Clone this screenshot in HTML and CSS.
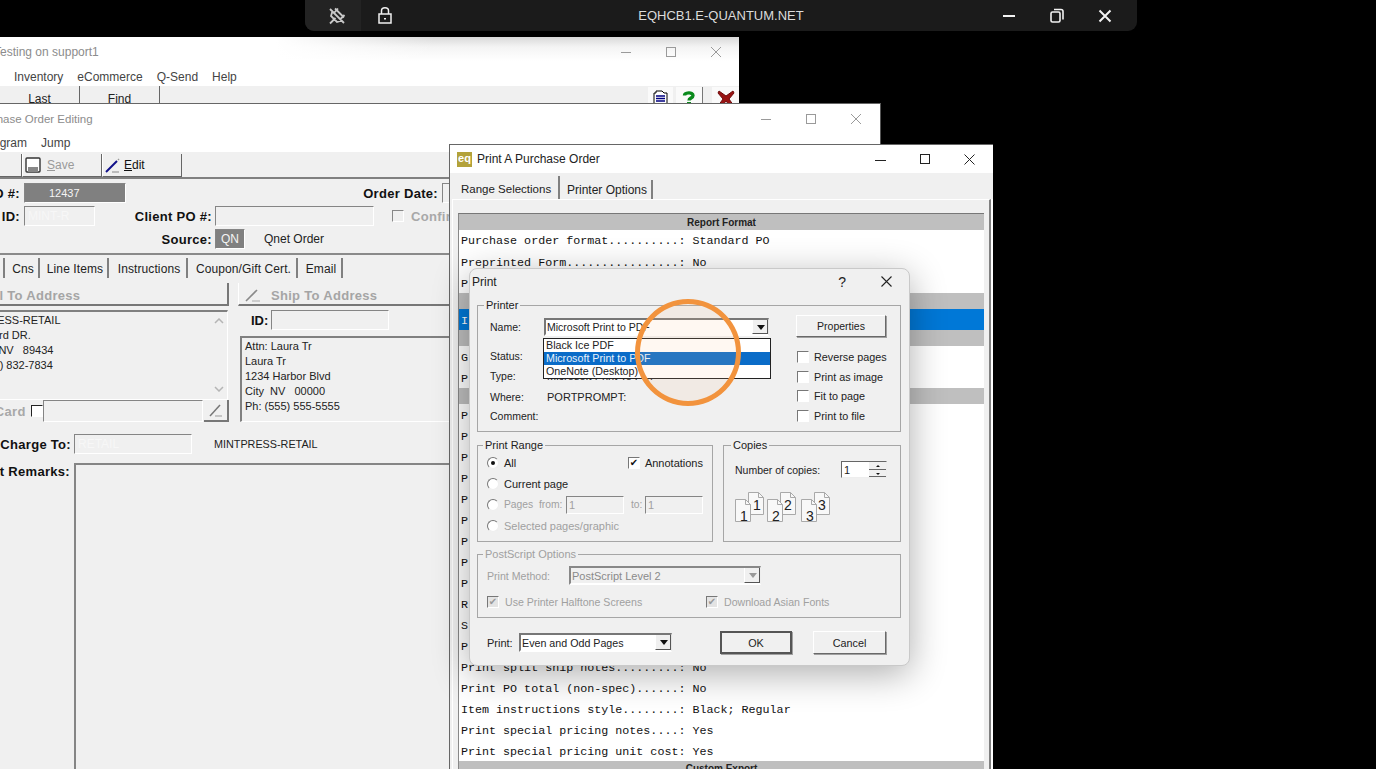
FILE: index.html
```html
<!DOCTYPE html>
<html lang="en">
<head>
<meta charset="utf-8">
<title>EQHCB1.E-QUANTUM.NET</title>
<link rel="stylesheet" href="styles.css">
</head>
<body>
<header class="rdp-bar">
  <div class="rdp-left">
    <div class="rdp-pin">
      <svg width="18" height="18" viewBox="0 0 18 18" fill="none" stroke="#c8c8c8" stroke-width="1.800"><path d="M2 2l14 14M7 1.500l9 9M4.500 4L3 9l6 6 5-1.500M10 1.500L6 6M16.500 8l-4 4M7.500 11L2 16.500"/></svg>
    </div>
    <svg class="rdp-lock" width="14" height="17" viewBox="0 0 14 17" fill="none" stroke="#f0f0f0" stroke-width="1.500"><rect x="1" y="7" width="12" height="9"/><path d="M3.500 7V3.800a3.500 3 0 0 1 7 0V7"/><rect x="6" y="11" width="2" height="1.500" fill="#f0f0f0" stroke="none"/></svg>
  </div>
  <div class="rdp-title">EQHCB1.E-QUANTUM.NET</div>
  <div class="rdp-controls">
    <svg width="13" height="13" viewBox="0 0 13 13"><path d="M0 7h12" stroke="#f2f2f2" stroke-width="2"/></svg>
    <svg width="14" height="15" viewBox="0 0 14 15" fill="none" stroke="#f2f2f2" stroke-width="1.600"><rect x="1" y="4" width="9" height="10" rx="1.500"/><path d="M4 1.500h7a2 2 0 0 1 2 2v8"/></svg>
    <svg width="14" height="14" viewBox="0 0 14 14"><path d="M1.500 1.500l11 11M12.500 1.500l-11 11" stroke="#f2f2f2" stroke-width="2"/></svg>
  </div>
</header>

<section class="window win-back">
  <div class="win-title">
    <span class="title-text">Testing on support1</span>
    <div class="caption-btns dim">
      <svg width="10" height="10" viewBox="0 0 10 10"><path d="M0 5.500h10" stroke="currentColor"/></svg>
      <svg width="10" height="10" viewBox="0 0 10 10"><rect x=".5" y=".5" width="9" height="9" fill="none" stroke="currentColor"/></svg>
      <svg width="10" height="10" viewBox="0 0 10 10"><path d="M0 0l10 10M10 0L0 10" stroke="currentColor"/></svg>
    </div>
  </div>
  <nav class="menu menu-back"><span>Inventory</span><span>eCommerce</span><span>Q-Send</span><span>Help</span></nav>
  <div class="toolbar-back">
    <div class="tb-back-btn">Last</div>
    <div class="tb-back-btn">Find</div>
    <div class="tb-back-icons">
      <div class="tb-icon">
        <svg width="15" height="15" viewBox="0 0 15 15"><path d="M3 1h6l2 2h3v12H1V3h2z" fill="#fff" stroke="#000"/><path d="M3 6h9M3 8.500h9M3 11h9" stroke="#000080" stroke-width="1.500"/></svg>
      </div>
      <div class="tb-icon tb-icon-q"><svg width="14" height="16" viewBox="0 0 14 16"><path d="M2.500 5.500C2.500 2.500 11 1.500 11 5.500c0 2.500-4 2.500-4 5" fill="none" stroke="#0a8a1c" stroke-width="3.400"/><rect x="5" y="12" width="4" height="4" fill="#0a8a1c"/></svg></div>
      <div class="tb-icon tb-icon-x"><svg width="18" height="16" viewBox="0 0 18 16"><path d="M2 1l7 5 7-5 1 2-5 6 5 7h-4l-4-5-4 5H1l5-7-5-6z" fill="#9a1414" stroke="#6e0c0c"/></svg></div>
    </div>
  </div>
</section>

<section class="window win-edit">
  <div class="win-title win-title-edit">
    <span class="title-text">Purchase Order Editing</span>
    <div class="caption-btns dim caption-edit">
      <svg width="10" height="10" viewBox="0 0 10 10"><path d="M0 5.500h10" stroke="currentColor"/></svg>
      <svg width="10" height="10" viewBox="0 0 10 10"><rect x=".5" y=".5" width="9" height="9" fill="none" stroke="currentColor"/></svg>
      <svg width="10" height="10" viewBox="0 0 10 10"><path d="M0 0l10 10M10 0L0 10" stroke="currentColor"/></svg>
    </div>
  </div>
  <nav class="menu menu-edit"><span>Program</span><span>Jump</span></nav>
  <div class="toolbar-edit">
    <div class="tool-btn tool-first"></div>
    <div class="tool-btn tool-off">
      <svg width="16" height="16" viewBox="0 0 16 16"><rect x="1" y="1" width="14" height="14" rx="1" fill="#fff" stroke="#333" stroke-width="1.400"/><rect x="3" y="10" width="10" height="5" fill="#888"/></svg>
      <span><u>S</u>ave</span>
    </div>
    <div class="tool-btn tool-edit">
      <svg width="16" height="16" viewBox="0 0 16 16"><path d="M1 15L12 4" stroke="#10108a" stroke-width="2"/><path d="M13 3l1-1" stroke="#999" stroke-width="1.500"/><path d="M7 15h7" stroke="#888"/></svg>
      <span><u>E</u>dit</span>
    </div>
  </div>

  <div class="po-grid">
    <label class="b lab r1">PO #:</label>
    <div class="field dark po-num">12437</div>
    <label class="b lab po-date-l">Order Date:</label>
    <div class="field po-date"></div>
    <label class="b lab r2">ID:</label>
    <div class="field po-id faint">MINT-R</div>
    <label class="b lab po-client-l">Client PO #:</label>
    <div class="field po-client"></div>
    <div class="po-conf"><i class="box off"></i><span class="b">Confirmed</span></div>
    <label class="b lab po-src-l">Source:</label>
    <div class="field dark po-src">QN</div>
    <div class="po-src-t">Qnet Order</div>
  </div>

  <div class="edit-tabs">
    <span></span><span>Cns</span><span>Line Items</span><span>Instructions</span><span>Coupon/Gift Cert.</span><span>Email</span>
  </div>

  <div class="addr-grid">
    <div class="addr-col">
      <div class="addr-btn"><span>Bill To Address</span></div>
      <div class="addr-box bill">
        <div class="addr-lines">
          <div>MINTPRESS-RETAIL</div>
          <div>100 Millard DR.</div>
          <div>Sparks&nbsp; &nbsp;NV &nbsp; 89434</div>
          <div>Ph:&nbsp; (775) 832-7834</div>
        </div>
        <div class="scroll">
          <svg width="10" height="6" viewBox="0 0 10 6"><path d="M1 5l4-4 4 4" fill="none" stroke="#b5b5b5" stroke-width="1.500"/></svg>
          <svg width="10" height="6" viewBox="0 0 10 6"><path d="M1 1l4 4 4-4" fill="none" stroke="#b5b5b5" stroke-width="1.500"/></svg>
        </div>
      </div>
      <div class="card-row">
        <span class="b gray">Credit Card</span><i class="box"></i>
        <div class="field card-field"></div>
        <div class="pencil-btn"><svg width="14" height="14" viewBox="0 0 14 14"><path d="M1 13L11 2" stroke="#777" stroke-width="1.500"/><path d="M6 13h7" stroke="#999"/></svg></div>
      </div>
    </div>
    <div class="addr-col">
      <div class="addr-btn addr-ship">
        <svg width="16" height="14" viewBox="0 0 16 14"><path d="M1 13L12 2" stroke="#8a8a8a" stroke-width="1.600"/><path d="M7 13h8" stroke="#aaa"/></svg>
        <span>Ship To Address</span>
      </div>
      <div class="ship-id"><label class="b ship-lab">ID:</label><div class="field ship-field"></div></div>
      <div class="addr-box ship">
        <div class="addr-lines ship-lines">
          <div>Attn: Laura Tr</div>
          <div>Laura Tr</div>
          <div>1234 Harbor Blvd</div>
          <div>City&nbsp; NV &nbsp; 00000</div>
          <div>Ph: (555) 555-5555</div>
        </div>
      </div>
    </div>
  </div>

  <div class="charge-row">
    <label class="b lab">Charge To:</label>
    <div class="field charge-field faint">RETAIL</div>
    <span class="charge-name">MINTPRESS-RETAIL</span>
  </div>
  <div class="remarks-row">
    <label class="b lab">Client Remarks:</label>
    <div class="field remarks"></div>
  </div>
</section>

<section class="window win-print">
  <div class="pw-title">
    <span class="eq-logo">eq</span>
    <span>Print A Purchase Order</span>
    <div class="caption-btns pw-caps">
      <svg width="11" height="11" viewBox="0 0 11 11"><path d="M0 6.500h11" stroke="currentColor"/></svg>
      <svg width="10" height="10" viewBox="0 0 10 10"><rect x=".5" y=".5" width="9" height="9" fill="none" stroke="currentColor"/></svg>
      <svg width="11" height="11" viewBox="0 0 11 11"><path d="M.5.500l10 10M10.500.500l-10 10" stroke="currentColor"/></svg>
    </div>
  </div>
  <div class="pw-tabs"><span class="on">Range Selections</span><span>Printer Options</span></div>
  <div class="pw-panel">
    <div class="report">
      <div class="rh rh-first">Report Format</div>
      <div class="rr rr-first">Purchase order format..........: Standard PO</div>
      <div class="rr">Preprinted Form................: No</div>
      <div class="rr">P</div>
      <div class="rh"></div>
      <div class="rr sel">I</div>
      <div class="rh"></div>
      <div class="rr">G</div>
      <div class="rr">P</div>
      <div class="rh"></div>
      <div class="rr">P</div>
      <div class="rr">P</div>
      <div class="rr">P</div>
      <div class="rr">P</div>
      <div class="rr">P</div>
      <div class="rr">P</div>
      <div class="rr">P</div>
      <div class="rr">P</div>
      <div class="rr">P</div>
      <div class="rr">R</div>
      <div class="rr">S</div>
      <div class="rr">P</div>
      <div class="rr">Print split ship notes.........: No</div>
      <div class="rr">Print PO total (non-spec)......: No</div>
      <div class="rr">Item instructions style........: Black; Regular</div>
      <div class="rr">Print special pricing notes....: Yes</div>
      <div class="rr">Print special pricing unit cost: Yes</div>
      <div class="rh">Custom Export</div>
    </div>
  </div>
</section>

<section class="dialog">
  <div class="dlg-title">
    <span>Print</span>
    <div class="dlg-caps">
      <span class="q">?</span>
      <svg width="11" height="11" viewBox="0 0 11 11"><path d="M.5.500l10 10M10.500.500l-10 10" stroke="#222" stroke-width="1.100"/></svg>
    </div>
  </div>
  <div class="group g-printer">
    <span class="legend">Printer</span>
    <div class="printer-main">
      <div class="p-left">
        <div class="name-row">
          <span class="p-lab">Name:</span>
          <div class="combo name-combo"><span>Microsoft Print to PDF</span><b class="arrow"></b></div>
        </div>
        <div class="p-row"><span class="p-lab">Status:</span></div>
        <div class="p-row"><span class="p-lab">Type:</span><span>Microsoft Print To PDF</span></div>
        <div class="p-row p-where"><span class="p-lab">Where:</span><span>PORTPROMPT:</span></div>
        <div class="p-row p-comment"><span class="p-lab">Comment:</span></div>
      </div>
      <div class="p-right">
        <div class="btn prop-btn">Properties</div>
        <div class="chk-row"><i class="box light"></i>Reverse pages</div>
        <div class="chk-row"><i class="box light"></i>Print as image</div>
        <div class="chk-row chk-fit"><i class="box light"></i>Fit to page</div>
        <div class="chk-row"><i class="box light"></i>Print to file</div>
      </div>
    </div>
    <div class="dropdown">
      <div>Black Ice PDF</div>
      <div class="dd-sel">Microsoft Print to PDF</div>
      <div>OneNote (Desktop)</div>
    </div>
  </div>
  <div class="group-pair">
    <div class="group g-range">
      <span class="legend">Print Range</span>
      <div class="rg-row"><i class="radio on"></i><span>All</span>
        <div class="annot"><i class="box light tick">&#10004;</i>Annotations</div></div>
      <div class="rg-row"><i class="radio"></i><span>Current page</span></div>
      <div class="rg-row muted"><i class="radio"></i><span class="pg-lab">Pages&nbsp; from:</span><div class="field pg-field">1</div><span class="to-lab">to:</span><div class="field pg-field">1</div></div>
      <div class="rg-row muted"><i class="radio"></i><span>Selected pages/graphic</span></div>
    </div>
    <div class="group g-copies">
      <span class="legend">Copies</span>
      <div class="cp-row"><span class="cp-lab">Number of copies:</span>
        <div class="spin"><span>1</span><div class="spin-btns"><b></b><b class="dn"></b></div></div>
      </div>
      <svg class="collate" width="100" height="32" viewBox="0 0 100 32">
        <defs>
          <g id="sheet"><path d="M.5.500h10l5 5v17H.500z" fill="#f8f8f8" stroke="#a9a9a9"/><path d="M10.500.500v5h5" fill="none" stroke="#a9a9a9"/></g>
        </defs>
        <g font-family="Liberation Sans, sans-serif" font-size="14" fill="#222">
          <use href="#sheet" x="14"/><use href="#sheet" x="1" y="7"/><text x="19" y="18">1</text><text x="6" y="29">1</text>
          <use href="#sheet" x="46"/><use href="#sheet" x="33" y="7"/><text x="50" y="18">2</text><text x="38" y="29">2</text>
          <use href="#sheet" x="80"/><use href="#sheet" x="67" y="7"/><text x="84" y="18">3</text><text x="72" y="29">3</text>
        </g>
      </svg>
    </div>
  </div>
  <div class="group g-ps muted">
    <span class="legend">PostScript Options</span>
    <div class="ps-row"><span class="ps-lab">Print Method:</span>
      <div class="combo ps-combo"><span>PostScript Level 2</span><b class="arrow off"></b></div>
    </div>
    <div class="ps-checks">
      <div class="ps-c1"><i class="box light tick off">&#10004;</i>Use Printer Halftone Screens</div>
      <div class="ps-c2"><i class="box light tick off">&#10004;</i>Download Asian Fonts</div>
    </div>
  </div>
  <div class="dlg-foot">
    <span class="foot-lab">Print:</span>
    <div class="combo foot-combo"><span>Even and Odd Pages</span><b class="arrow"></b></div>
    <div class="btn ok-btn">OK</div>
    <div class="btn cancel-btn">Cancel</div>
  </div>
</section>

<div class="marker"></div>
</body>
</html>
```
FILE: styles.css
```css
* { box-sizing: border-box; }
html, body { margin: 0; height: 100%; }
body {
  position: relative;
  width: 1376px;
  height: 769px;
  overflow: hidden;
  background: #000;
  font-family: "Liberation Sans", Arial, sans-serif;
  font-size: 12px;
  color: #222;
}
i { display: block; font-style: normal; flex: none; }

/* remote desktop bar */
.rdp-bar {
  position: absolute; left: 305px; top: 0; width: 832px; height: 31px;
  display: grid; grid-template-columns: 1fr auto 1fr; align-items: center;
  background: #1b1b1b; border-radius: 0 0 9px 9px; color: #ddd;
}
.rdp-left { display: flex; align-items: center; height: 100%; }
.rdp-pin { width: 56px; height: 100%; display: flex; align-items: center; justify-content: center; background: #232323; border-radius: 0 0 0 9px; padding-left: 8px; }
.rdp-lock { margin-left: 17px; }
.rdp-title { font-size: 13px; color: #dcdcdc; }
.rdp-controls { display: flex; justify-content: flex-end; align-items: center; gap: 34px; padding-right: 25px; }

.window { position: absolute; overflow: hidden; }
.caption-btns { display: flex; align-items: center; gap: 35px; margin-left: auto; color: #222; }
.caption-btns.dim { color: #9a9a9a; }
.title-text { color: #8c8c8c; }

/* back window */
.win-back { left: -60px; top: 37px; width: 799px; height: 67px; background: #fff; }
.win-back .win-title {
  height: 28px; display: flex; align-items: center; padding: 2px 18px 0 54px;
  background: linear-gradient(90deg, #fff 42%, rgba(255,255,255,0) 62%), linear-gradient(180deg, #d9d9d9 0, #f4f4f4 10px, #fff 24px);
}
.menu { display: flex; color: #444; }
.menu-back { height: 21px; align-items: center; gap: 14px; padding: 2px 0 0 74px; }
.toolbar-back { height: 18px; background: #f0f0f0; display: flex; }
.tb-back-btn { width: 80px; height: 30px; border-right: 1px solid #666; text-align: center; padding-top: 6px; color: #222; }
.tb-back-btn:first-child { width: 140px; padding-left: 60px; }
.tb-back-icons { margin-left: auto; display: flex; padding-right: 0; padding-top: 1px; }
.tb-icon { width: 25px; height: 20px; background: #fafafa; display: flex; justify-content: center; padding-top: 3px; margin-left: 3px; }
.tb-icon-q { width: 27px; border-right: 1px solid #777; }
.tb-icon-x { margin-left: 9px; width: 27px; }

/* edit window */
.win-edit { left: -60px; top: 103px; width: 941px; height: 666px; background: #f0f0f0; border-top: 1px solid #666; border-right: 1px solid #555; }
.win-title-edit { height: 29px; background: #fff; display: flex; align-items: center; padding: 0 19px 0 60px; }
.win-title-edit .title-text { font-size: 11.500px; margin-left: -27px; }
.menu-edit { height: 19px; background: #fff; align-items: center; gap: 14px; padding-left: 41px; }
.toolbar-edit { height: 27px; display: flex; padding: 2px 0 0 2px; border-bottom: 2px solid #808080; }
.tool-btn {
  width: 80px; height: 23px; display: flex; align-items: center; gap: 6px; padding-left: 2px;
  border-right: 1px solid #666; border-bottom: 1px solid #666; border-left: 1px solid #fff;
  color: #111; font-size: 12px;
}
.tool-off { color: #9a9a9a; }
.tool-edit { gap: 3px; }
.tool-first { width: 80px; }

.po-grid {
  display: grid;
  grid-template-columns: 80px 4px 71px 31px 86px 3px 30px 129px 64px 4px 78px;
  grid-auto-rows: 20px; row-gap: 3px; padding-top: 4px; align-items: center;
}
.b { font-weight: 700; font-size: 13px; color: #111; letter-spacing: .3px; }
.lab { text-align: right; white-space: nowrap; }
.field {
  height: 100%; background: #f0f0f0; border: 1px solid; border-color: #858585 #fff #fff #858585;
  display: flex; align-items: center; padding-left: 3px; overflow: hidden; white-space: nowrap;
}
.field.dark { background: #808080; color: #f4f4f4; }
.field.faint { color: #f7f7f7; }
.r1, .r2 { grid-column: 1; }
.po-num { grid-column: 3 / 5; padding-left: 24px; font-size: 11px; }
.po-date-l { grid-column: 5 / 10; }
.po-date { grid-column: 11; }
.po-id { grid-column: 3 / 4; }
.po-client-l { grid-column: 5 / 6; }
.po-client { grid-column: 7 / 9; }
.po-conf { grid-column: 9 / 12; display: flex; align-items: center; gap: 7px; padding-left: 18px; white-space: nowrap; }
.po-conf .b { color: #a8a8a8; }
.po-src-l { grid-column: 5 / 6; }
.po-src { grid-column: 7 / 8; padding-left: 5px; }
.po-src-t { grid-column: 8 / 11; padding-left: 19px; white-space: nowrap; }

.box { width: 12px; height: 12px; background: #fff; border: 1px solid; border-color: #222 #fff #fff #222; }
.box.off { background: #f0f0f0; border-color: #888 #fff #fff #888; }
.box.light { border-color: #777 #fff #fff #777; }

.edit-tabs {
  margin-top: 4px; border-top: 2px solid #8a8a8a; padding-top: 3px; height: 28px;
  display: grid; grid-template-columns: 65px 35px 69px 79px 110px 45px; justify-content: start;
}
.edit-tabs span { height: 20px; border-right: 2px solid #808080; padding-left: 3px; text-align: center; line-height: 22px; white-space: nowrap; letter-spacing: .1px; }

.addr-grid { display: grid; grid-template-columns: 289px 340px; column-gap: 9px; padding-top: 2px; }
.addr-col { display: flex; flex-direction: column; }
.addr-btn {
  height: 23px; display: flex; align-items: center; padding: 3px 0 0 41px; font-weight: 700; font-size: 13px; color: #a5a5a5;
  border-right: 2px solid #777; border-bottom: 2px solid #777; border-left: 1px solid #fff; letter-spacing: .3px;
}
.addr-ship { padding-left: 6px; gap: 10px; }
.addr-box { border: 1px solid; border-color: #808080 #fff #fff #808080; display: flex; border-top-width: 2px; border-left-width: 2px; }
.bill { height: 90px; margin: 4px 1px 0 0; }
.addr-lines { flex: 1; padding: 1px 0 0 13px; line-height: 15px; white-space: nowrap; color: #222; font-size: 11px; }
.scroll { width: 16px; display: flex; flex-direction: column; justify-content: space-between; align-items: center; padding: 6px 0 7px; }
.card-row { display: flex; align-items: center; height: 22px; }
.card-row .gray { color: #a8a8a8; white-space: nowrap; width: 86px; text-align: right; }
.card-row .box { margin-left: 5px; }
.card-field { width: 161px; }
.pencil-btn { width: 25px; height: 22px; display: flex; align-items: center; justify-content: center; border-right: 2px solid #777; border-bottom: 2px solid #777; margin-left: 1px; }
.ship-id { display: flex; height: 20px; margin-top: 4px; align-items: center; padding-left: 13px; gap: 3px; }
.ship-lab { width: 17px; letter-spacing: 0; white-space: nowrap; }
.ship-field { width: 118px; }
.ship { height: 86px; margin: 6px 0 0 2px; }
.ship-lines { padding-left: 3px; padding-top: 1px; }
.charge-row { display: grid; grid-template-columns: 131px 118px auto; height: 20px; margin-top: 12px; align-items: center; column-gap: 3px; }
.charge-row .lab { grid-column: 1; }
.charge-name { padding-left: 19px; font-size: 10.800px; }
.remarks-row { display: grid; grid-template-columns: 130px 700px; column-gap: 4px; margin-top: 9px; height: 320px; }
.remarks-row .lab { padding-top: 1px; }
.remarks { align-items: flex-start; border-top-width: 2px; border-left-width: 2px; }

/* print window */
.win-print { left: 449px; top: 144px; width: 544px; height: 625px; background: #f0f0f0; border: 1px solid #666; border-bottom: 0; border-right: 0; }
.pw-title { height: 28px; background: #fff; display: flex; align-items: center; padding: 0 18px 0 7px; gap: 5px; color: #222; }
.eq-logo { width: 15px; height: 15px; background: #b3a23a; color: #fff; font-size: 11px; font-weight: 700; line-height: 13px; text-align: center; }
.pw-caps { gap: 34px; color: #222; }
.pw-tabs { display: flex; height: 26px; padding: 3px 0 0 2px; white-space: nowrap; }
.pw-tabs span { height: 23px; padding: 0 0 0 7px; border-right: 2px solid #808080; }
.pw-tabs .on { width: 108px; padding-left: 9px; font-size: 11.500px; line-height: 26px; }
.pw-tabs span:not(.on) { margin-top: 4px; height: 19px; line-height: 20px; width: 93px; }
.pw-panel { height: 570px; margin: 0 2px 0 2px; padding: 13px 5px 0 5px; border-top: 1px solid #fff; border-left: 1px solid #fff; border-right: 2px solid #808080; box-shadow: 2px 0 0 #fff; }
.report { background: #fff; border-top: 1px solid #777; border-left: 1px solid #888; width: 526px; height: 560px; font-family: "Liberation Mono", "Courier New", monospace; font-size: 11.700px; color: #111; overflow: hidden; }
.rr { height: 21px; line-height: 25px; padding-left: 2px; white-space: pre; }
.rr-first { line-height: 23px; }
.rh { height: 16px; background: #bfbfbf; text-align: center; font: 700 10px/16px "Liberation Sans", sans-serif; color: #222; }
.rh-first { line-height: 18px; }
.rr.sel { background: #0078d7; color: #fff; }

/* print dialog */
.dialog {
  position: absolute; left: 469px; top: 268px; width: 441px; height: 398px;
  background: #f0f0f0; border: 1px solid #c9c9c9; border-radius: 8px; padding: 0 8px 0 7px;
  box-shadow: 0 8px 36px rgba(0,0,0,.32); font-size: 11px; color: #222;
}
.dlg-title { height: 25px; margin: 0 0 11px -8px; display: flex; align-items: center; padding: 0 9px 0 3px; font-size: 12px; }
.dlg-caps { margin-left: auto; display: flex; align-items: center; gap: 35px; }
.q { font-size: 14px; }
.group { border: 1px solid #a6a6a6; position: relative; }
.legend { display: block; width: fit-content; margin: -8px 0 0 6px; padding: 0 2px; background: #f0f0f0; line-height: 14px; font-size: 11px; }
.g-printer { height: 127px; }
.printer-main { display: flex; margin-top: -6px; }
.p-left { width: 291px; padding-top: 12px; }
.name-row { display: flex; align-items: center; height: 18px; margin-bottom: 10px; }
.p-lab { padding-left: 12px; flex: none; font-size: 10.500px; }
.name-row .p-lab { width: 66px; }
.p-row { height: 20px; display: flex; align-items: center; white-space: nowrap; }
.p-row .p-lab { width: 69px; }
.p-where { margin-top: 1px; }
.p-comment { margin-top: -1px; }
.combo { position: relative; display: flex; align-items: center; justify-content: space-between; background: #fff; border: 2px solid; border-color: #777 #e5e5e5 #fff #777; border-right-width: 1px; padding-left: 1px; white-space: nowrap; }
.name-combo { width: 225px; height: 18px; font-size: 10.500px; }
.arrow { width: 16px; height: 100%; flex: none; background: #f0f0f0; border-right: 1px solid #555; border-bottom: 1px solid #555; border-left: 1px solid #fff; position: relative; }
.arrow::after { content: ""; position: absolute; left: 4px; top: 5px; border: 4px solid transparent; border-top: 5px solid #111; border-bottom: 0; }
.arrow.off::after { border-top-color: #999; }
.p-right { margin-left: 27px; padding-top: 9px; }
.btn { display: flex; align-items: center; justify-content: center; background: #f0f0f0; border: 1px solid; border-color: #fff #696969 #696969 #fff; box-shadow: 1px 1px 0 #a0a0a0; font-size: 10.800px; }
.prop-btn { width: 90px; height: 22px; margin-bottom: 10px; font-size: 10.500px; }
.chk-row { height: 20px; display: flex; align-items: center; gap: 5px; padding-left: 1px; white-space: nowrap; font-size: 10.800px; }
.chk-fit { margin-top: -1px; }
.dropdown { position: absolute; left: 65px; top: 32px; width: 228px; height: 41px; background: #fff; border: 1px solid #222; font-size: 10.700px; }
.dropdown div { height: 13px; line-height: 13px; padding-left: 2px; }
.dropdown .dd-sel { background: #0a6cc8; color: #e8f2fb; }

.group-pair { display: flex; gap: 10px; margin-top: 13px; }
.g-range { width: 236px; height: 97px; padding: 0 9px; }
.rg-row { height: 21px; display: flex; align-items: center; gap: 5px; white-space: nowrap; }
.g-range .legend { margin-left: -4px; }
.muted, .muted .legend { color: #a0a0a0; }
.radio { width: 12px; height: 12px; border-radius: 50%; background: #fff; border: 1px solid; border-color: #777 #eee #eee #777; position: relative; }
.radio.on::after { content: ""; position: absolute; left: 3px; top: 3px; width: 4px; height: 4px; border-radius: 50%; background: #111; }
.annot { margin-left: auto; display: flex; align-items: center; gap: 5px; }
.tick { font-size: 10px; line-height: 10px; text-align: center; color: #111; font-family: "DejaVu Sans", sans-serif; }
.tick.off { color: #999; background: #e4e4e4; }
.pg-lab { width: 57px; font-size: 10.300px; }
.pg-field { width: 58px; height: 18px; flex: none; padding-left: 2px; }
.to-lab { width: 9px; margin-left: 2px; font-size: 10.300px; }
.g-copies { width: 178px; height: 97px; padding-left: 11px; }
.g-copies .legend { margin-left: -4px; }
.cp-row { display: flex; align-items: center; height: 17px; margin-top: 9px; }
.cp-lab { width: 106px; white-space: nowrap; font-size: 10.500px; }
.spin { width: 46px; height: 17px; background: #fff; border: 1px solid; border-color: #666 #eee #eee #666; display: flex; justify-content: space-between; align-items: center; padding-left: 2px; }
.spin-btns { width: 17px; height: 100%; display: flex; flex-direction: column; }
.spin-btns b { flex: 1; background: #f0f0f0; border-bottom: 1px solid #666; position: relative; }
.spin-btns b::after { content: ""; position: absolute; left: 7px; top: 3px; border: 2px solid transparent; border-bottom: 2px solid #111; border-top: 0; }
.spin-btns .dn::after { border-bottom: 0; border-top: 2px solid #111; }
.collate { display: block; margin: 14px 0 0 -1px; }
.g-ps { height: 64px; margin-top: 12px; padding: 0 9px; }
.g-ps .legend { margin-left: -4px; }
.ps-row { display: flex; align-items: center; height: 19px; margin-top: 5px; }
.ps-lab { width: 82px; white-space: nowrap; font-size: 10.600px; }
.ps-combo { width: 192px; height: 19px; background: #f0f0f0; color: #8a8a8a; border-color: #888 #eee #fff #888; }
.ps-checks { display: flex; margin-top: 11px; font-size: 10.600px; }
.ps-c1 { width: 219px; display: flex; align-items: center; gap: 6px; white-space: nowrap; }
.ps-c2 { display: flex; align-items: center; gap: 6px; white-space: nowrap; }
.dlg-foot { display: flex; align-items: center; height: 23px; margin-top: 13px; padding-left: 10px; }
.foot-lab { width: 32px; }
.foot-combo { width: 153px; height: 19px; font-size: 10.700px; }
.ok-btn { width: 72px; height: 23px; margin-left: 48px; border: 2px solid #555; }
.cancel-btn { width: 73px; height: 23px; margin-left: 21px; }

.marker {
  position: absolute; left: 635px; top: 299px; width: 106px; height: 107px;
  border: 5px solid #f2933d; border-radius: 50%; background: rgba(255, 196, 150, .12);
}
```
